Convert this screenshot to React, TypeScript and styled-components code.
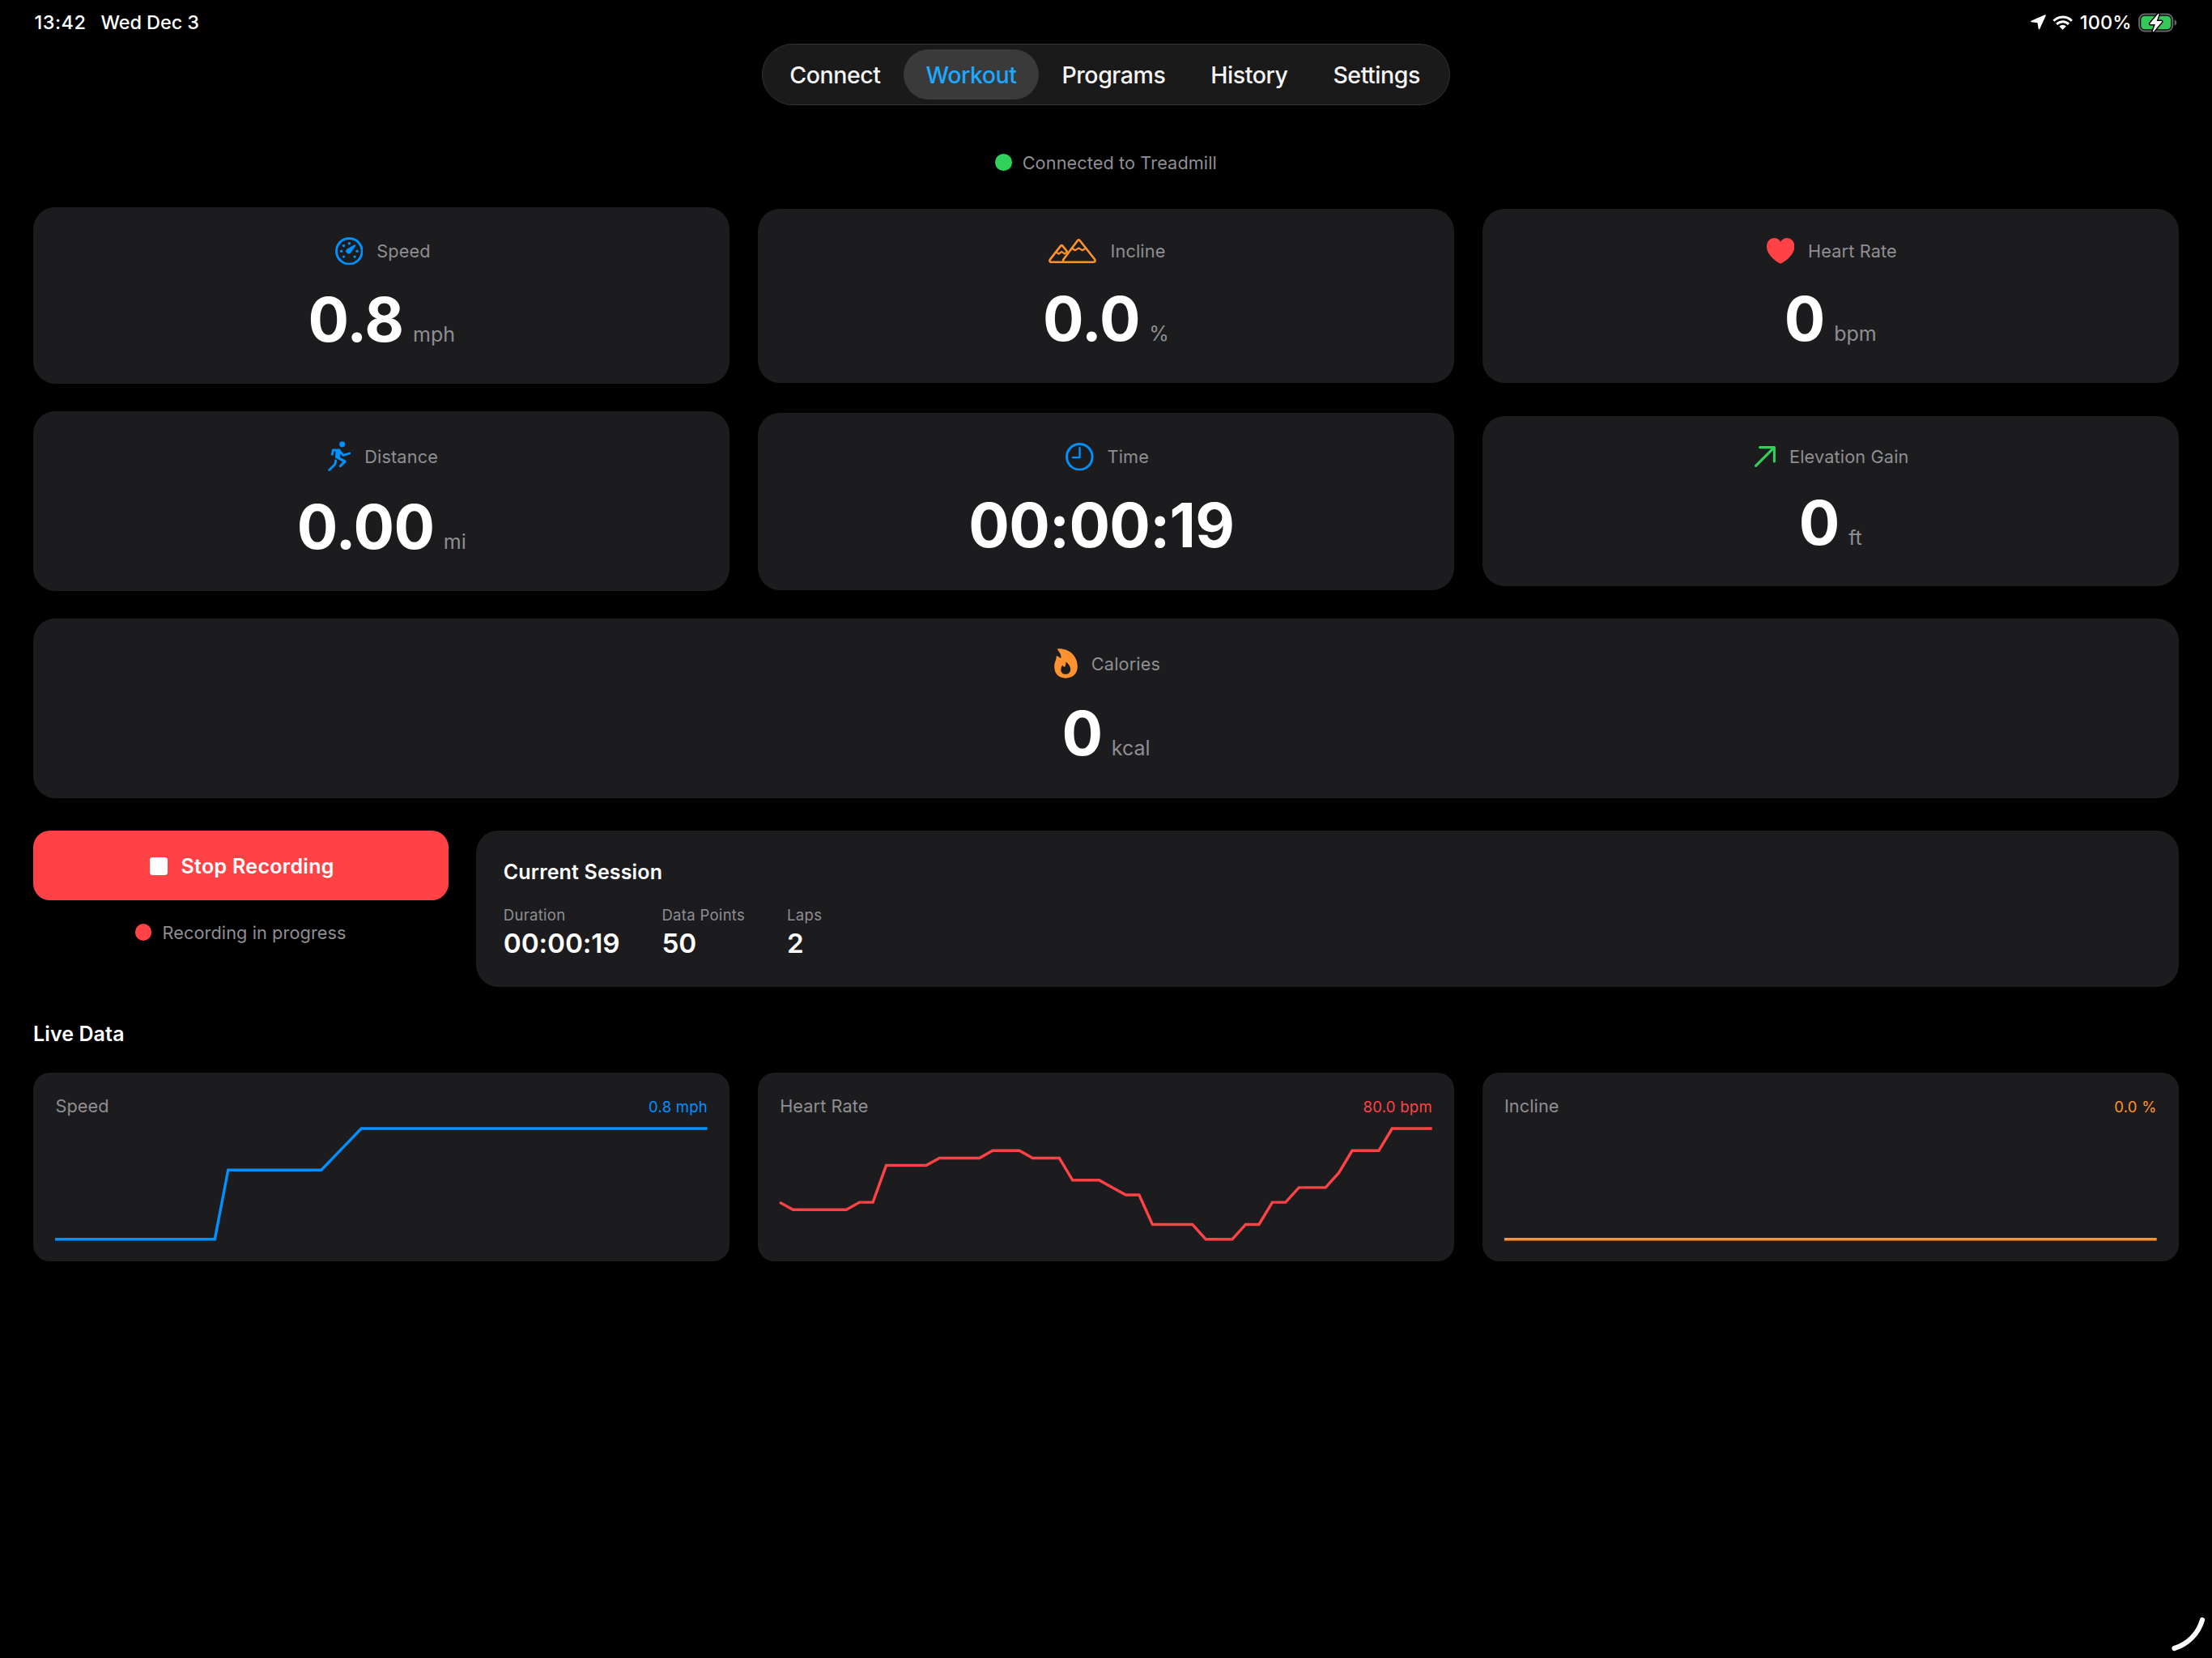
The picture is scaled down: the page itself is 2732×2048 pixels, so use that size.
import React from 'react'
import styled, { createGlobalStyle } from 'styled-components'

const colors = {
    blue: '#0091ff',
    orange: '#ff9230',
    red: '#ff4245',
    green: '#30d158',
    gray: '#8e8e93',
    card: '#1c1c1e',
}

const GaugeIcon = () => (
    <svg width="34.6" height="34.6" viewBox="-17.3 -17.3 34.6 34.6" fill={colors.blue}>
        <circle r="15.8" fill="none" stroke={colors.blue} strokeWidth="2.9" />
        {[[0, -9.5], [-6.8, -6.8], [-9.7, 0], [9.7, 0], [-6.8, 6.8], [6.8, 6.8]].map(([x, y]) => (
            <circle key={`${x}${y}`} cx={x} cy={y} r="1.7" />
        ))}
        <path d="M7.9 -7.9 Q8.4 -7.2 7.6 -6.1 L2 2 A3.1 3.1 0 1 1 -3.1 -2.6 L6.2 -7.7 Q7.4 -8.5 7.9 -7.9Z" />
    </svg>
)

const RunnerIcon = () => (
    <svg
        width="28.7"
        height="37"
        viewBox="20 779 86 111"
        fill="none"
        stroke={colors.blue}
        strokeWidth="8.6"
        strokeLinecap="round"
        strokeLinejoin="round"
    >
        <circle cx="73" cy="790.5" r="10.8" fill={colors.blue} stroke="none" />
        <path d="M36 828 L39 812 L62 812" />
        <path d="M53 814 L63 815 L61 838 L51 838 Z" fill={colors.blue} />
        <path d="M65 817 L77 831 L100.5 824" />
        <path d="M55 839 L83 854 L66 871" strokeWidth="9.6" />
        <path d="M49 851 C48 860 46 867 41 870 L25 885.5" />
    </svg>
)

const MountainsIcon = () => (
    <svg
        width="59"
        height="30"
        viewBox="0 0 59 30"
        fill="none"
        stroke={colors.orange}
        strokeWidth="2.6"
        strokeLinecap="round"
        strokeLinejoin="round"
    >
        <path d="M18.6 25.2 L35.8 2.3 Q37.3 0.5 38.8 2.3 L57 25.2 Q58.8 28.7 55.4 28.7 L20.4 28.7 Q16.8 28.7 18.6 25.2Z" />
        <path d="M18 28.7 L3.6 28.7 Q0.2 28.7 2 25.4 L14.9 8.9 Q16.2 7.3 17.5 8.9 L23.4 16.3" />
        <path d="M9.8 16.8 L12.6 18.6 L16.2 15.8 L19.8 18.4 L22.2 17" strokeWidth="2.2" />
        <path d="M29.4 12 L33 14.2 L37.3 11.4 L41.6 14.2 L45.4 12" strokeWidth="2.2" />
    </svg>
)

const HeartIcon = () => (
    <svg width="34.4" height="31.6" viewBox="0 0 34.4 31.6" fill={colors.red}>
        <path d="M17.2 31.6 C16.2 31.6 0 22.6 0 10.4 C0 4.3 4.1 0 9.4 0 C12.8 0 15.6 1.8 17.2 4.7 C18.8 1.8 21.6 0 25 0 C30.3 0 34.4 4.3 34.4 10.4 C34.4 22.6 18.2 31.6 17.2 31.6Z" />
    </svg>
)

const ClockIcon = () => (
    <svg width="34.6" height="34.6" viewBox="-17.3 -17.3 34.6 34.6" fill="none" stroke={colors.blue} strokeLinecap="round">
        <circle r="15.8" strokeWidth="2.9" />
        <path d="M0.2 -11 V0.8 H-8.4" strokeWidth="2.4" strokeLinejoin="round" />
    </svg>
)

const ArrowIcon = () => (
    <svg
        width="26"
        height="26"
        viewBox="0 0 26 26"
        fill="none"
        stroke={colors.green}
        strokeWidth="3.1"
        strokeLinecap="round"
        strokeLinejoin="round"
    >
        <path d="M1.6 24.4 L24.3 1.6 M6.6 1.6 H24.4 V19" />
    </svg>
)

const FlameIcon = () => (
    <svg width="29" height="36.8" viewBox="307 155 87 110.5" fill={colors.orange} fillRule="evenodd">
        <path
            d="M323 155.5 C360 154 393.5 180 393.5 222 C393.5 249 376 265 349 265 C323 265 307.5 248 307.5 222 C307.5 206 315 198 315 186 C315.5 182 318 182 321 184
               C326 187 329 190 332 191 C334 183 330 172 320 160 C318 157.5 320 155.5 323 155.5Z
               M351 205.5 C360 212 367.5 222 367.5 232 C367.5 243 360 250.5 349.5 250.5 C339 250.5 332 243 332 233.5 C332 226 335 221 338 217 C340 220 343 223 346.5 223.5 C349.5 218 350.5 212 350 206Z"
        />
    </svg>
)

const LocationIcon = () => (
    <svg width="19" height="18.4" viewBox="82 53 58 56" fill="#fff" stroke="#fff" strokeWidth="5" strokeLinejoin="round">
        <path d="M85 79 L137 56 L114 106 L110 82 Z" />
    </svg>
)

const WifiIcon = () => (
    <svg width="25.2" height="18" viewBox="169.5 54 76 54.5" fill="none" stroke="#fff" strokeWidth="9">
        <path d="M173.5 74.5 A48 48 0 0 1 241.5 74.5" />
        <path d="M185 87 A31.5 31.5 0 0 1 230 87" />
        <path d="M194.5 94.5 A19 19 0 0 1 220.5 94.5 L207.5 108 Z" fill="#fff" stroke="none" />
    </svg>
)

const BatteryIcon = () => (
    <svg width="47.6" height="24" viewBox="0 0 47.6 24">
        <rect x="1.1" y="1.6" width="41.2" height="20.8" rx="6.8" fill="none" stroke="#66666a" strokeWidth="2" />
        <rect x="3.3" y="3.7" width="36.8" height="16.6" rx="4.6" fill="#34c759" />
        <path d="M44.6 8.2 Q47.4 9.4 47.4 12 Q47.4 14.6 44.6 15.8Z" fill="#66666a" />
        <path
            d="M24.5 1 L14.4 13 Q13.9 13.8 14.9 13.9 L20.9 14 L17.9 22.6 Q18 23.8 19 22.9 L29 11.1 Q29.5 10.2 28.6 10.1 L22.7 10 L25.6 1.4 Q25.5 .2 24.5 1Z"
            fill="#fff"
            stroke="#000"
            strokeWidth="3"
            strokeLinejoin="round"
            paintOrder="stroke"
        />
    </svg>
)

const tabs = ['Connect', 'Workout', 'Programs', 'History', 'Settings']

// gap is the space between the label row and the value row
const metrics = [
    { label: 'Speed', value: '0.8', unit: 'mph', icon: <GaugeIcon />, height: 218.3, gap: 21.6 },
    { label: 'Incline', value: '0.0', unit: '%', icon: <MountainsIcon />, height: 215, gap: 20 },
    { label: 'Heart Rate', value: '0', unit: 'bpm', icon: <HeartIcon />, height: 215, gap: 20 },
    { label: 'Distance', value: '0.00', unit: 'mi', icon: <RunnerIcon />, height: 222, gap: 23.5 },
    { label: 'Time', value: '00:00:19', unit: '', icon: <ClockIcon />, height: 219, gap: 21.5 },
    { label: 'Elevation Gain', value: '0', unit: 'ft', icon: <ArrowIcon />, height: 210, gap: 17.8 },
    { label: 'Calories', value: '0', unit: 'kcal', icon: <FlameIcon />, height: 221.4, gap: 22.2, wide: true },
]

const session = [
    { label: 'Duration', value: '00:00:19' },
    { label: 'Data Points', value: '50' },
    { label: 'Laps', value: '2' },
]

const speedData = [...Array(13).fill(0), ...Array(8).fill(0.5), 0.6, 0.7, ...Array(27).fill(0.8)]
const heartData = [
    70, 69, 69, 69, 69, 69, 70, 70, 75, 75, 75, 75, 76, 76, 76, 76, 77, 77, 77, 76, 76, 76, 73, 73, 73,
    72, 71, 71, 67, 67, 67, 67, 65, 65, 65, 67, 67, 70, 70, 72, 72, 72, 74, 77, 77, 77, 80, 80, 80, 80,
]
const inclineData = Array(50).fill(0)

const charts = [
    { label: 'Speed', value: '0.8 mph', color: colors.blue, data: speedData },
    { label: 'Heart Rate', value: '80.0 bpm', color: colors.red, data: heartData },
    { label: 'Incline', value: '0.0 %', color: colors.orange, data: inclineData },
]

const CHART_W = 805.7
const CHART_H = 136.7

const toPoints = (data: number[]) => {
    const min = Math.min(...data)
    const range = Math.max(...data) - min || 1
    return data
        .map((v, i) => `${(i * CHART_W) / (data.length - 1)},${CHART_H - ((v - min) / range) * CHART_H}`)
        .join(' ')
}

const App: React.FC = () => {
    return (
        <Page>
            <GlobalStyle />
            <StatusBar>
                <StatusGroup $gap={18}>
                    <Clock>13:42</Clock>
                    <span>Wed Dec 3</span>
                </StatusGroup>
                <StatusGroup $gap={8}>
                    <LocationIcon />
                    <WifiIcon />
                    <Percent>100%</Percent>
                    <BatteryIcon />
                </StatusGroup>
            </StatusBar>

            <TabBar>
                {tabs.map((tab) => (
                    <Tab key={tab} $active={tab === 'Workout'}>{tab}</Tab>
                ))}
            </TabBar>

            <Content>
                <Status $top={56.7}>
                    <Dot color={colors.green} />
                    Connected to Treadmill
                </Status>

                <MetricGrid>
                    {metrics.map((m) => (
                        <MetricCard key={m.label} $height={m.height} $wide={m.wide}>
                            <MetricHeader>
                                {m.icon}
                                {m.label}
                            </MetricHeader>
                            <MetricValue $gap={m.gap}>
                                <b>{m.value}</b>
                                {/* the empty unit still takes its gap */}
                                <Unit>{m.unit}</Unit>
                            </MetricValue>
                        </MetricCard>
                    ))}
                </MetricGrid>

                <Controls>
                    <RecordColumn>
                        <StopButton>
                            <StopSquare />
                            Stop Recording
                        </StopButton>
                        <Status $top={25.6}>
                            <Dot color={colors.red} />
                            Recording in progress
                        </Status>
                    </RecordColumn>
                    <SessionCard>
                        <Title>Current Session</Title>
                        <SessionStats>
                            {session.map((s) => (
                                <div key={s.label}>
                                    <StatLabel>{s.label}</StatLabel>
                                    <StatValue>{s.value}</StatValue>
                                </div>
                            ))}
                        </SessionStats>
                    </SessionCard>
                </Controls>

                <LiveTitle>Live Data</LiveTitle>
                <ChartGrid>
                    {charts.map((c) => (
                        <ChartCard key={c.label}>
                            <ChartHeader>
                                <span>{c.label}</span>
                                <ChartValue color={c.color}>{c.value}</ChartValue>
                            </ChartHeader>
                            <ChartSvg viewBox={`0 0 ${CHART_W} ${CHART_H}`} preserveAspectRatio="none">
                                <polyline points={toPoints(c.data)} fill="none" stroke={c.color} strokeWidth="3.43" />
                            </ChartSvg>
                        </ChartCard>
                    ))}
                </ChartGrid>
            </Content>

            <CornerHint viewBox="0 0 100 100">
                <path d="M53.5 88 A51 51 0 0 0 88 53" fill="none" stroke="#fff" strokeWidth="6.2" strokeLinecap="round" />
            </CornerHint>
        </Page>
    )
}

export default App

const GlobalStyle = createGlobalStyle`
  body {
    margin: 0;
    background: #000;
  }
  * {
    box-sizing: border-box;
  }
  svg {
    display: block;
    flex-shrink: 0;
  }
`

const Page = styled.div`
  height: 2048px;
  overflow: hidden;
  background: #000;
  color: #fff;
  font-family: Inter, "Liberation Sans", sans-serif;
`

const StatusBar = styled.div`
  display: flex;
  justify-content: space-between;
  height: 54px;
  padding: 1px 43.5px 0 42.5px;
  font-size: 23.5px;
  font-weight: 500;
  letter-spacing: -0.1px;
`

const StatusGroup = styled.div<{ $gap: number }>`
  display: flex;
  align-items: center;
  gap: ${(p) => p.$gap}px;
`

const Clock = styled.span`
  letter-spacing: 0.5px;
`

const Percent = styled.span`
  letter-spacing: 0.2px;
`

const TabBar = styled.nav`
  display: flex;
  align-items: center;
  gap: 2px;
  width: 850px;
  height: 76px;
  margin: 0 auto;
  padding: 0 6.3px;
  border: 1.7px solid #333334;
  border-radius: 38px;
  background: #1a1a1a;
`

const Tab = styled.div<{ $active: boolean }>`
  height: 62px;
  padding: 1px 27px 0;
  border-radius: 31px;
  background: ${(p) => (p.$active ? '#3a3a3a' : 'transparent')};
  color: ${(p) => (p.$active ? '#1ea8ff' : '#f5f5f5')};
  font-size: 28.5px;
  font-weight: 500;
  line-height: 61px;
  letter-spacing: -0.45px;
`

const Content = styled.main`
  padding: 0 41px;
`

const Status = styled.div<{ $top: number }>`
  display: flex;
  align-items: center;
  justify-content: center;
  gap: 13px;
  height: 28px;
  margin-top: ${(p) => p.$top}px;
  color: ${colors.gray};
  font-size: 21.7px;
  letter-spacing: 0.1px;
`

const Dot = styled.span`
  width: 20.6px;
  height: 20.6px;
  border-radius: 50%;
  background: ${(p) => p.color};
`

const MetricGrid = styled.div`
  display: grid;
  grid-template-columns: repeat(3, 1fr);
  align-items: center;
  gap: 34px 34.3px;
  margin-top: 41.5px;
`

const MetricCard = styled.div<{ $height: number; $wide?: boolean }>`
  display: flex;
  flex-direction: column;
  align-items: center;
  grid-column: ${(p) => (p.$wide ? '1 / -1' : 'auto')};
  height: ${(p) => p.$height}px;
  padding-top: ${(p) => p.$height / 2 - 73.5}px;
  border-radius: 27.4px;
  background: ${colors.card};
`

const MetricHeader = styled.div`
  display: flex;
  align-items: center;
  gap: 17px;
  height: 36px;
  padding-left: 3px;
  color: ${colors.gray};
  font-size: 21.7px;
  letter-spacing: 0.15px;
`

const MetricValue = styled.div<{ $gap: number }>`
  display: flex;
  align-items: baseline;
  gap: 11.5px;
  margin-top: ${(p) => p.$gap}px;
  font-size: 75px;
  line-height: 92px;

  b {
    font-weight: 650;
    letter-spacing: -0.7px;
  }
`

const Unit = styled.span`
  color: ${colors.gray};
  font-size: 25px;
  line-height: 1;
  letter-spacing: 0;
`

const Controls = styled.div`
  display: flex;
  gap: 34.3px;
  margin-top: 40.5px;
`

const RecordColumn = styled.div`
  width: 512.5px;
`

const StopButton = styled.div`
  display: flex;
  align-items: center;
  justify-content: center;
  gap: 16.5px;
  height: 85.7px;
  padding: 1px 0 0 3px;
  border-radius: 20.6px;
  background: ${colors.red};
  font-size: 25px;
  font-weight: 600;
  letter-spacing: 0.3px;
`

const StopSquare = styled.span`
  width: 22.3px;
  height: 22px;
  border-radius: 3.4px;
  background: #fff;
`

const SessionCard = styled.div`
  flex: 1;
  height: 193px;
  padding: 34.5px 34px;
  border-radius: 27.4px;
  background: ${colors.card};
`

const Title = styled.div`
  font-size: 25px;
  font-weight: 600;
  line-height: 32px;
  letter-spacing: 0.15px;
`

const SessionStats = styled.div`
  display: flex;
  gap: 52px;
  margin-top: 25.3px;
`

const StatLabel = styled.div`
  color: ${colors.gray};
  font-size: 18.5px;
  line-height: 24px;
  letter-spacing: 0.3px;
`

const StatValue = styled.div`
  margin-top: 2.6px;
  font-size: 33.3px;
  font-weight: 600;
  line-height: 40px;
  letter-spacing: -0.1px;
`

const LiveTitle = styled(Title)`
  margin-top: 41.5px;
  letter-spacing: 0.1px;
`

const ChartGrid = styled.div`
  display: grid;
  grid-template-columns: repeat(3, 1fr);
  gap: 34.3px;
  margin-top: 32.5px;
`

const ChartCard = styled.div`
  height: 232.6px;
  padding: 28px 27.4px 0;
  border-radius: 20.6px;
  background: ${colors.card};
`

const ChartHeader = styled.div`
  display: flex;
  align-items: baseline;
  justify-content: space-between;
  height: 26px;
  color: ${colors.gray};
  font-size: 21.7px;
  line-height: 26px;
  letter-spacing: 0.1px;
`

const ChartValue = styled.span`
  color: ${(p) => p.color};
  font-size: 18.5px;
  letter-spacing: 0.25px;
`

const ChartSvg = styled.svg`
  width: 100%;
  height: ${CHART_H}px;
  margin-top: 14.3px;
  overflow: visible;
`

const CornerHint = styled.svg`
  position: absolute;
  top: 1948px;
  left: 2632px;
  width: 100px;
  height: 100px;
`
